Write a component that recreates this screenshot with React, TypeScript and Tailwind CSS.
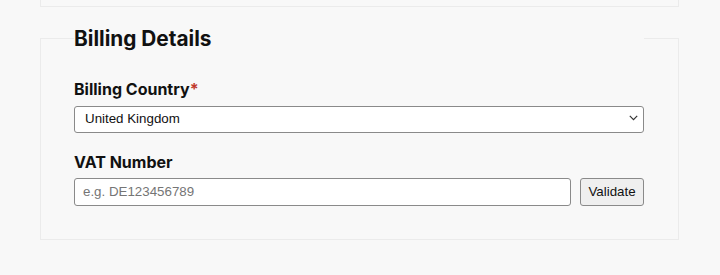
import React from "react";

export default function App() {
  return (
    <div className="min-h-[275px] w-[720px] bg-[#f8f8f8] font-['Inter',sans-serif] text-[#111]">
      <div className="ml-10 h-[7px] w-[639px] border-x border-b border-[#ebebeb]" />
      <fieldset className="ml-10 mt-[17px] w-[639px] border border-[#ebebeb] pl-[33px] pr-[34px] pb-[33px] pt-[14px]">
        <legend className="w-full pt-[1px] text-[20.8px] font-bold leading-[28px]">Billing Details</legend>
        <div className="flex flex-col">
          <label className="mt-[10px] text-[16px] font-bold leading-[24px]">
            Billing Country<span className="text-[#c0392b]">*</span>
          </label>
          <div className="relative mt-[4px]">
            <select
              defaultValue="United Kingdom"
              className="h-[27px] w-full appearance-none rounded-[3px] border border-[#8a8a8a] bg-white pl-[10px] pr-6 font-['Liberation_Sans',Arial,sans-serif] text-[13.333px] text-[#111] outline-none"
            >
              <option>United Kingdom</option>
              <option>Germany</option>
              <option>France</option>
            </select>
            <svg
              className="pointer-events-none absolute right-[6px] top-[10px]"
              width="9"
              height="6"
              viewBox="0 0 9 6"
              fill="none"
            >
              <path d="M0.8 0.9 L4.5 4.6 L8.2 0.9" stroke="#333" strokeWidth="1.2" />
            </svg>
          </div>
          <label className="mt-[17px] text-[16px] font-bold leading-[24px]">VAT Number</label>
          <div className="mt-[4px] flex items-center gap-[9px]">
            <input
              type="text"
              placeholder="e.g. DE123456789"
              className="h-[28px] flex-1 rounded-[3px] border border-[#8a8a8a] bg-white px-[8px] font-['Liberation_Sans',Arial,sans-serif] text-[13.333px] text-[#111] outline-none placeholder:text-[#757575]"
            />
            <button className="h-[28px] w-[64px] rounded-[3px] border border-[#8a8a8a] bg-[#efefef] font-['Liberation_Sans',Arial,sans-serif] text-[13.333px] text-[#111]">
              Validate
            </button>
          </div>
        </div>
      </fieldset>
    </div>
  );
}
